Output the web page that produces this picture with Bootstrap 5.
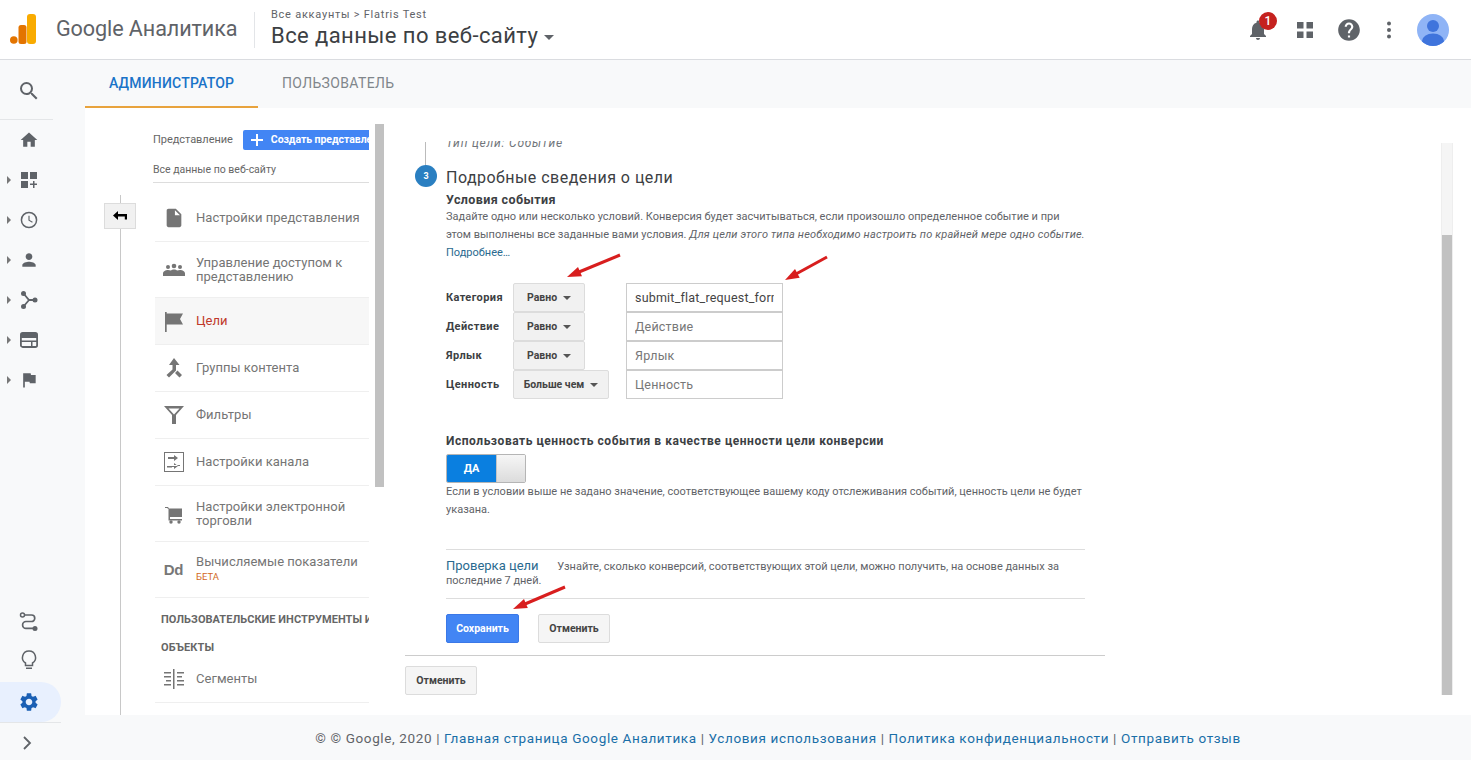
<!DOCTYPE html>
<html lang="ru">
<head>
<meta charset="utf-8">
<title>Google Аналитика</title>
<link href="https://cdn.jsdelivr.net/npm/bootstrap@5.3.0/dist/css/bootstrap.min.css" rel="stylesheet">
<style>
html,body{height:760px;overflow:hidden}
body{font-family:Roboto,"Liberation Sans",sans-serif;font-size:11px;color:#5f6368;background:#f8f9fa;width:1471px}
.ga-head{height:60px;background:#fff;border-bottom:1px solid #dadce0;padding-left:10px}
.ga-logo{width:26px;height:30px;margin-top:-2px}
.ga-brand{font-size:21.6px;color:#5f6368;margin-left:20px;width:183px;white-space:nowrap;letter-spacing:-.1px}
.ga-sep{width:1px;height:36px;background:#e3e5e8;margin:0 16px 0 15px}
.ga-crumb{font-size:11px;color:#5f6368;line-height:14px;margin-top:-2px;letter-spacing:.75px}
.ga-title{font-size:22px;color:#3c4043;line-height:28px;letter-spacing:.42px;white-space:nowrap}
.ga-caret{display:inline-block;border:5px solid transparent;border-top-color:#5f6368;border-bottom-width:0;margin-left:6px;vertical-align:3px;border-left-width:5.5px;border-right-width:5.5px}
.ga-tools{margin-left:auto;position:relative;flex:none;height:59px;padding-right:22px}
.ga-tool{width:44px;display:flex;justify-content:center;align-items:center;position:relative}
.ga-tool-bell{margin-right:3px}
.ga-tool-help{margin-right:-4px}
.ga-badge{position:absolute;left:23px;top:-6px;width:18px;height:18px;border-radius:50%;background:#c5221f;color:#fff;font-size:12px;font-weight:500;line-height:18px;text-align:center}
.ga-avatar{width:32px;height:32px;margin-left:6px}
.ga-main{height:700px}
.ga-rail{width:85px;flex:none;background:#f8f9fa;padding-top:11px}
.ga-rail-top{width:53px;padding-left:17px;border-bottom:1px solid #e4e6e8;height:49px;padding-top:8px}
.ga-rail-item{height:40px;width:58px;position:relative;display:flex;align-items:center;justify-content:center;color:#5f6368}
.ga-rail-item svg{fill:#5f6368}
.ga-rail-caret{position:absolute;left:7px;top:16px;width:0;height:0;border:4px solid transparent;border-left-color:#777;border-right-width:0}
.ga-rail-gap{flex:1}
.ga-rail-route{margin-bottom:-2px}
.ga-rail-bulb{margin-bottom:2px}
.ga-rail-on{width:61px;background:#e8f0fe;border-radius:0 20px 20px 0;padding-right:3px}
.ga-rail-on svg{fill:#1a5fb4}
.ga-rail-end{border-top:1px solid #e4e6e8;width:61px;height:38px;padding-top:9px;padding-right:7px}
.ga-body{width:1386px}
.ga-tabs{height:48px;background:#f8f9fa}
.ga-tab{height:48px;line-height:46px;padding:0 24px;font-size:14px;color:#80868b;letter-spacing:.37px}
.ga-tab-on{color:#1a73c8;border-bottom:2px solid #e8a33d;font-weight:500;padding:0 24px;width:173px;letter-spacing:.2px}
.ga-tab-off{padding-left:24px}
.ga-work{height:607px;background:#fff;position:relative;overflow:hidden}
.ga-left{width:300px;flex:none;position:relative;height:607px;padding:17px 0 0 68px}
.ga-left-in{width:216px;overflow:hidden}
.ga-rule{position:absolute;left:35px;top:87px;bottom:0;width:1px;background:#c8c8c8}
.ga-back{position:absolute;left:19px;top:95px;width:32px;height:26px;background:#f1f1f1;border:1px solid #dcdcdc;display:flex;align-items:center;justify-content:center}
.ga-sb{position:absolute;left:290px;top:16px;width:9px;height:363px;background:#c1c1c1}
.ga-viewrow{height:30px;white-space:nowrap;color:#666;letter-spacing:-.05px}
.ga-add{background:#4285f4;color:#fff;font-weight:700;border-radius:2px 0 0 2px;height:20px;line-height:20px;padding-left:7px;margin-left:10px;flex:1;overflow:hidden;font-size:10.5px;display:flex;align-items:center;gap:7px;min-width:0}
.ga-add svg{flex:none}
.ga-viewname{font-size:10.5px;height:28px;line-height:30px;border-bottom:1px solid #ddd;color:#666;margin-bottom:12px}
.ga-item{display:flex;align-items:center;border-bottom:1px solid #efefef;height:47px;margin-left:2px;font-size:13px;line-height:14px;color:#757575;letter-spacing:.03px}
.ga-item-tall{height:56px}
.ga-item-cur{background:#f7f7f7;color:#c0392b}
.ga-ic{width:41px;flex:none;display:flex;justify-content:center;padding-right:4px}
.ga-ic svg{fill:#757575}
.ga-dd{font:700 15px "Liberation Sans",sans-serif;color:#777;letter-spacing:-.2px}
.ga-beta{font-size:9.5px;color:#d2691e;display:block;margin-top:1px;letter-spacing:0}
.ga-sect{font-size:11px;font-weight:700;color:#666;line-height:28px;margin:8px 0 0 8px;white-space:nowrap;letter-spacing:.05px}
.ga-seg{height:43px;padding-bottom:4px;margin-top:-2px}
.ga-right{flex:1;position:relative;padding:33px 0 0 20px;height:607px}
.ga-clip{height:559px;overflow:hidden;width:700px;position:relative}
.ga-typeline{font-style:italic;color:#70757a;font-size:12px;line-height:14px;margin-left:41px;margin-top:-5px;height:14px;letter-spacing:.8px;white-space:nowrap}
.ga-stepline{position:absolute;left:20px;top:1px;width:1px;height:24px;background:#bbb}
.ga-step{position:absolute;left:10px;top:24px;width:22px;height:22px;border-radius:50%;background:#2a7fc1;color:#fff;font-size:9px;font-weight:700;line-height:22px;text-align:center}
.ga-pane{margin-left:41px;width:639px;padding-top:18px}
.ga-h{font-size:16px;line-height:20px;color:#3c4043;letter-spacing:.47px;margin:0;font-weight:400}
.ga-sub{font-size:12.5px;font-weight:700;color:#3c4043;line-height:16px;margin-top:4px;letter-spacing:.4px}
.ga-txt{font-size:11px;line-height:18px;color:#5f6368;white-space:nowrap}
.ga-txt i{letter-spacing:.17px}
.ga-more{color:#2a6a8f;line-height:18px;margin-bottom:21px}
.ga-fr{height:29px}
.ga-lab{width:67px;font-weight:700;color:#3c4043;font-size:11px;letter-spacing:.4px;padding-top:2px}
.ga-sel{width:72px;height:29px;background:#f1f1f1;border:1px solid #dcdcdc;border-radius:2px;font-size:10.5px;font-weight:700;color:#444;display:flex;align-items:center;justify-content:center;gap:6px;padding:0;box-shadow:none}
.ga-sel-w{width:96px}
.ga-tri{display:inline-block;border:3.5px solid transparent;border-top:4px solid #555;border-bottom:0;border-left-width:4px;border-right-width:4px}
.ga-inp{width:157px;height:29px;margin-left:41px;border:1px solid #ccc;border-radius:0;padding:0 8px;font-size:12.5px;color:#444;background:#fff;letter-spacing:.2px;box-shadow:none}
.ga-inp-w{margin-left:17px}
.ga-inp::placeholder{color:#777;opacity:1}
.ga-use{font-size:12px;font-weight:700;color:#3c4043;line-height:16px;margin-top:34px;letter-spacing:.54px;white-space:nowrap}
.ga-tog{width:80px;height:29px;margin-top:5px;border:1px solid #b5b5b5;border-radius:2px;overflow:hidden}
.ga-tog-on{width:49px;background:#0a7fe0;color:#fff;font-weight:700;font-size:11px;text-align:center;line-height:27px}
.ga-tog-off{flex:1;background:linear-gradient(#f6f6f6,#dcdcdc);border-left:1px solid #c4c4c4}
.ga-hr{border-top:1px solid #ddd;margin-top:30px}
.ga-check{padding:9px 0 10px;border-bottom:1px solid #ddd;line-height:14px;white-space:nowrap}
.ga-check b{font-weight:400;font-size:13px;color:#2a6a8f;margin-right:16px;letter-spacing:0}
.ga-btns{gap:19px;margin-top:15px}
.ga-btn{height:29px;width:72px;border:1px solid #dcdcdc;background:#f5f5f5;border-radius:2px;padding:0;font-size:10.5px;font-weight:700;color:#444;line-height:27px;box-shadow:none}
.ga-btn-blue{width:73px;background:#4285f4;border-color:#3b78e7;color:#fff}
.ga-btn:hover{background:#f5f5f5;color:#444;border-color:#dcdcdc}
.ga-btn-blue:hover{background:#4285f4;color:#fff;border-color:#3b78e7}
.ga-bot{width:700px;border-top:1px solid #ccc;margin-top:12px;padding-top:10px}
.ga-track{position:absolute;left:1356px;top:35px;width:12px;height:552px;background:#f5f5f5;border-left:1px solid #eee;border-right:1px solid #eee}
.ga-thumb{position:absolute;left:0;right:0;bottom:0;height:460px;background:#c1c1c1}
.ga-arrow{position:absolute;pointer-events:none}
.ga-arrow line{stroke:#d81e1e;stroke-width:3}
.ga-arrow polygon{fill:#d81e1e}
.ga-foot{height:45px;background:#f8f9fa;font-size:13.5px;line-height:46px;color:#5f6368;text-align:center;white-space:nowrap;letter-spacing:.63px}
.ga-foot a{color:#1a6fa8;text-decoration:none}
</style>
</head>
<body>
<header class="ga-head d-flex align-items-center">
  <svg class="ga-logo" viewBox="0 0 26 30"><rect x="17" y="0" width="9" height="30" rx="3" fill="#f9ab00"/><rect x="8.500" y="11" width="8" height="19" rx="2.500" fill="#e37400"/><circle cx="3.800" cy="26" r="3.800" fill="#e37400"/></svg>
  <div class="ga-brand">Google Аналитика</div>
  <div class="ga-sep"></div>
  <div>
    <div class="ga-crumb">Все аккаунты &gt; Flatris Test</div>
    <div class="ga-title">Все данные по веб-сайту<span class="ga-caret"></span></div>
  </div>
  <div class="ga-tools d-flex align-items-center justify-content-end">
    <div class="ga-tool ga-tool-bell"><svg width="24" height="24" viewBox="0 0 24 24" fill="#5f6368"><path d="M12 22c1.100 0 2-.9 2-2h-4c0 1.100.9 2 2 2zm6-6v-5c0-3.070-1.630-5.640-4.500-6.320V4c0-.83-.67-1.500-1.500-1.500s-1.500.67-1.500 1.500v.68C7.640 5.360 6 7.920 6 11v5l-2 2v1h16v-1l-2-2z"/></svg><span class="ga-badge">1</span></div>
    <div class="ga-tool"><svg width="24" height="24" viewBox="0 0 24 24" fill="#5f6368"><path d="M4 4h6.500v6.500H4zM13.500 4H20v6.500h-6.500zM4 13.500h6.500V20H4zM13.500 13.500H20V20h-6.500z"/></svg></div>
    <div class="ga-tool ga-tool-help"><svg width="26" height="26" viewBox="0 0 24 24" fill="#5f6368"><path d="M12 2C6.480 2 2 6.480 2 12s4.480 10 10 10 10-4.480 10-10S17.520 2 12 2zm1 17h-2v-2h2v2zm2.070-7.750l-.9.920C13.450 12.900 13 13.500 13 15h-2v-.5c0-1.100.45-2.100 1.170-2.830l1.240-1.260c.37-.36.59-.86.59-1.410 0-1.100-.9-2-2-2s-2 .9-2 2H8c0-2.210 1.790-4 4-4s4 1.790 4 4c0 .88-.36 1.680-.93 2.250z"/></svg></div>
    <div class="ga-tool"><svg width="24" height="24" viewBox="0 0 24 24" fill="#5f6368"><circle cx="12" cy="5.500" r="2"/><circle cx="12" cy="12" r="2"/><circle cx="12" cy="18.500" r="2"/></svg></div>
    <svg class="ga-avatar" viewBox="0 0 32 32"><defs><clipPath id="avc"><circle cx="16" cy="16" r="16"/></clipPath></defs><circle cx="16" cy="16" r="16" fill="#8fb4f6"/><g clip-path="url(#avc)" fill="#3f74dc"><circle cx="16" cy="12" r="6"/><ellipse cx="16" cy="27" rx="11" ry="7.500"/></g></svg>
  </div>
</header>
<div class="ga-main d-flex">
  <nav class="ga-rail d-flex flex-column">
    <div class="ga-rail-top"><svg width="24" height="24" viewBox="0 0 24 24" fill="#5f6368"><path d="M15.500 14h-.79l-.28-.27A6.470 6.470 0 0 0 16 9.500 6.500 6.500 0 1 0 9.500 16c1.610 0 3.090-.59 4.230-1.570l.27.280v.79l5 4.990L20.490 19l-4.990-5zm-6 0C7.010 14 5 11.990 5 9.500S7.010 5 9.500 5 14 7.010 14 9.500 11.990 14 9.500 14z"/></svg></div>
    <div class="ga-rail-item"><svg width="20" height="20" viewBox="0 0 24 24"><path d="M10 20v-6h4v6h5v-8h3L12 3 2 12h3v8z"/></svg></div>
    <div class="ga-rail-item"><span class="ga-rail-caret"></span><svg width="20" height="20" viewBox="0 0 20 20"><path d="M2 2h7v7H2zM11 2h7v7h-7zM2 11h7v7H2zM14 11h1.500v2.500H18V15h-2.500v3H14v-3h-3v-1.500h3z"/></svg></div>
    <div class="ga-rail-item"><span class="ga-rail-caret"></span><svg width="20" height="20" viewBox="0 0 24 24"><path d="M12 2a10 10 0 1 0 0 20 10 10 0 0 0 0-20zm0 18.200a8.200 8.200 0 1 1 0-16.400 8.200 8.200 0 0 1 0 16.400zM12.700 7h-1.400v5.600l4.500 2.800.7-1.200-3.800-2.300z"/></svg></div>
    <div class="ga-rail-item"><span class="ga-rail-caret"></span><svg width="20" height="20" viewBox="0 0 24 24"><path d="M12 12c2.210 0 4-1.790 4-4s-1.790-4-4-4-4 1.790-4 4 1.790 4 4 4zm0 2c-2.670 0-8 1.340-8 4v2h16v-2c0-2.660-5.330-4-8-4z"/></svg></div>
    <div class="ga-rail-item"><span class="ga-rail-caret"></span><svg width="20" height="20" viewBox="0 0 20 20"><circle cx="4.500" cy="3.500" r="2.500"/><circle cx="4.500" cy="16.500" r="2.500"/><circle cx="16" cy="10" r="2.500"/><path d="M4.500 3.500L10 10h6M4.500 16.500L10 10" fill="none" stroke="#5f6368" stroke-width="1.800"/></svg></div>
    <div class="ga-rail-item"><span class="ga-rail-caret"></span><svg width="20" height="20" viewBox="0 0 20 20"><rect x="1.900" y="3" width="16.200" height="14" rx="1.800" fill="none" stroke="#5f6368" stroke-width="1.800"/><path d="M2 3.500h16V8H2zM2 10.500h16V12H2zM12 11h1.500v5.500H12z"/></svg></div>
    <div class="ga-rail-item"><span class="ga-rail-caret"></span><svg width="20" height="20" viewBox="0 0 24 24"><path d="M14.400 6L14 4H5v17h2v-7h5.600l.4 2h7V6z"/></svg></div>
    <div class="ga-rail-gap"></div>
    <div class="ga-rail-item ga-rail-route"><svg width="22" height="22" viewBox="0 0 22 22"><circle cx="4.500" cy="4" r="2" fill="none" stroke="#5f6368" stroke-width="1.500"/><circle cx="17" cy="17.500" r="2.500"/><path d="M6.500 4h7a3 3 0 0 1 0 6.500H8a3 3 0 0 0 0 6.800h7" fill="none" stroke="#5f6368" stroke-width="1.700"/></svg></div>
    <div class="ga-rail-item ga-rail-bulb"><svg width="20" height="22" viewBox="0 0 20 22"><path d="M10 2a6.500 6.500 0 0 0-3.500 12v2.500h7V14A6.500 6.500 0 0 0 10 2z" fill="none" stroke="#5f6368" stroke-width="1.500"/><path d="M7 18.500h6v1.500H7z"/></svg></div>
    <div class="ga-rail-item ga-rail-on"><svg width="22" height="22" viewBox="0 0 24 24"><path d="M19.140 12.940c.04-.3.06-.61.06-.94 0-.32-.02-.64-.07-.94l2.030-1.580a.49.49 0 0 0 .12-.61l-1.920-3.320a.488.488 0 0 0-.59-.22l-2.390.96c-.5-.38-1.030-.7-1.620-.94l-.36-2.540a.484.484 0 0 0-.48-.41h-3.840c-.24 0-.43.17-.47.41l-.36 2.540c-.59.24-1.130.57-1.620.94l-2.390-.96c-.22-.08-.47 0-.59.22L2.740 8.870c-.12.21-.08.47.12.61l2.030 1.580c-.05.3-.09.63-.09.94s.02.64.07.94l-2.030 1.580a.49.49 0 0 0-.12.61l1.920 3.320c.12.22.37.29.59.22l2.390-.96c.5.38 1.030.7 1.620.94l.36 2.540c.05.24.24.41.48.41h3.840c.24 0 .44-.17.47-.41l.36-2.540c.59-.24 1.130-.56 1.620-.94l2.390.96c.22.08.47 0 .59-.22l1.920-3.320c.12-.22.07-.47-.12-.61l-2.010-1.580zM12 15.600c-1.980 0-3.600-1.620-3.600-3.600s1.620-3.600 3.600-3.600 3.600 1.620 3.600 3.600-1.620 3.600-3.600 3.600z"/></svg></div>
    <div class="ga-rail-end d-flex justify-content-center align-items-start"><svg width="22" height="22" viewBox="0 0 22 22"><path d="M8 5l6 6-6 6" fill="none" stroke="#5f6368" stroke-width="1.800"/></svg></div>
  </nav>
  <div class="ga-body d-flex flex-column">
    <div class="ga-tabs d-flex">
      <div class="ga-tab ga-tab-on text-nowrap">АДМИНИСТРАТОР</div>
      <div class="ga-tab ga-tab-off text-nowrap">ПОЛЬЗОВАТЕЛЬ</div>
    </div>
    <div class="ga-work d-flex">
      <aside class="ga-left">
        <div class="ga-rule"></div>
        <div class="ga-back"><svg width="14" height="10" viewBox="0 0 14 10"><path d="M0 4.500L5 0v3h9v5.500h-2.200V5.500H5V9z" fill="#000"/></svg></div>
        <div class="ga-left-in">
          <div class="ga-viewrow d-flex align-items-center">Представление<div class="ga-add"><svg width="14" height="14" viewBox="0 0 14 14"><path d="M6 1h2v5h5v2H8v5H6V8H1V6h5z" fill="#fff"/></svg>Создать представление</div></div>
          <div class="ga-viewname">Все данные по веб-сайту</div>
          <div class="ga-item"><span class="ga-ic"><svg width="22" height="22" viewBox="0 0 24 24"><path d="M6 2c-1.100 0-2 .9-2 2v16c0 1.100.9 2 2 2h12c1.100 0 2-.9 2-2V8l-6-6H6zm7 7V3.500L18.500 9H13z"/></svg></span><span>Настройки представления</span></div>
          <div class="ga-item ga-item-tall"><span class="ga-ic"><svg width="24" height="24" viewBox="0 0 24 24"><circle cx="6" cy="9" r="2"/><circle cx="12" cy="8" r="2.300"/><circle cx="18" cy="9" r="2"/><path d="M1 18v-2.500c0-2 2.500-3.500 5-3.500 1 0 2 .2 2.700.6C9.500 12 10.700 11.500 12 11.500s2.500.5 3.300 1.100c.7-.4 1.700-.6 2.700-.6 2.500 0 5 1.500 5 3.500V18z"/></svg></span><span>Управление доступом к представлению</span></div>
          <div class="ga-item ga-item-cur"><span class="ga-ic"><svg width="20" height="21" viewBox="0 0 20 21"><path d="M1 1h1.700v20H1zM2.700 2.500H19l-3 5.500 3 5.500H2.700z"/></svg></span><span>Цели</span></div>
          <div class="ga-item"><span class="ga-ic"><svg width="24" height="24" viewBox="0 0 24 24"><path d="M17.500 21.500L20 19l-4.500-4.500L13 17zM7 9h3.500v4.500L4.500 19 7 21.500l7-7V9h3.500L12 2z"/></svg></span><span>Группы контента</span></div>
          <div class="ga-item"><span class="ga-ic"><svg width="22" height="20" viewBox="0 0 22 20"><path fill-rule="evenodd" d="M1 1h20l-8 9v9H9v-9zM5.500 3.500L11 9.500l5.500-6z"/></svg></span><span>Фильтры</span></div>
          <div class="ga-item"><span class="ga-ic"><svg width="20" height="20" viewBox="0 0 20 20"><rect x=".5" y=".5" width="19" height="19" fill="none" stroke="#757575"/><path d="M4 5h6V3l4 3-4 3V7H4zM16 13h-6v-2l4 3-4 3v-2H6v-1h10zM3 14h5v1.500H3z"/></svg></span><span>Настройки канала</span></div>
          <div class="ga-item ga-item-tall"><span class="ga-ic"><svg width="20" height="20" viewBox="0 0 20 20"><path d="M1 3h3l1 1.500h13v8.500H6v2h12v1.500H4.500V5L3 4H1z"/><circle cx="7" cy="18" r="1.700"/><circle cx="15" cy="18" r="1.700"/></svg></span><span>Настройки электронной торговли</span></div>
          <div class="ga-item ga-item-tall"><span class="ga-ic"><span class="ga-dd">Dd</span></span><span>Вычисляемые показатели<span class="ga-beta">БЕТА</span></span></div>
          <div class="ga-sect">ПОЛЬЗОВАТЕЛЬСКИЕ ИНСТРУМЕНТЫ И<br>ОБЪЕКТЫ</div>
          <div class="ga-item ga-seg"><span class="ga-ic"><svg width="22" height="20" viewBox="0 0 22 20"><path d="M10 0h1.500v20H10zM1 3h7v1.500H1zM1 7h7v1.500H1zM3 11h5v1.500H3zM1 15h7v1.500H1zM14 3h7v1.500h-7zM14 7h5v1.500h-5zM14 11h7v1.500h-7zM14 15h7v1.500h-7z"/></svg></span><span>Сегменты</span></div>
        </div>
        <div class="ga-sb"></div>
      </aside>
      <section class="ga-right">
        <div class="ga-clip">
          <div class="ga-typeline">Тип цели: Событие</div>
          <div class="ga-stepline"></div>
          <div class="ga-step">3</div>
          <div class="ga-pane">
            <h2 class="ga-h">Подробные сведения о цели</h2>
            <div class="ga-sub">Условия события</div>
            <div class="ga-txt">Задайте одно или несколько условий. Конверсия будет засчитываться, если произошло определенное событие и при<br>этом выполнены все заданные вами условия. <i>Для цели этого типа необходимо настроить по крайней мере одно событие.</i></div>
            <div class="ga-more">Подробнее…</div>
            <div class="ga-fr d-flex align-items-center"><span class="ga-lab">Категория</span><button type="button" class="btn ga-sel">Равно <span class="ga-tri"></span></button><input class="form-control ga-inp" value="submit_flat_request_form"></div>
            <div class="ga-fr d-flex align-items-center"><span class="ga-lab">Действие</span><button type="button" class="btn ga-sel">Равно <span class="ga-tri"></span></button><input class="form-control ga-inp" placeholder="Действие"></div>
            <div class="ga-fr d-flex align-items-center"><span class="ga-lab">Ярлык</span><button type="button" class="btn ga-sel">Равно <span class="ga-tri"></span></button><input class="form-control ga-inp" placeholder="Ярлык"></div>
            <div class="ga-fr d-flex align-items-center"><span class="ga-lab">Ценность</span><button type="button" class="btn ga-sel ga-sel-w">Больше чем <span class="ga-tri"></span></button><input class="form-control ga-inp ga-inp-w" placeholder="Ценность"></div>
            <div class="ga-use">Использовать ценность события в качестве ценности цели конверсии</div>
            <div class="ga-tog d-flex"><div class="ga-tog-on">ДА</div><div class="ga-tog-off"></div></div>
            <div class="ga-txt">Если в условии выше не задано значение, соответствующее вашему коду отслеживания событий, ценность цели не будет<br>указана.</div>
            <div class="ga-hr"></div>
            <div class="ga-check"><b>Проверка цели</b> Узнайте, сколько конверсий, соответствующих этой цели, можно получить, на основе данных за<br>последние 7 дней.</div>
            <div class="ga-btns d-flex"><button type="button" class="btn ga-btn ga-btn-blue">Сохранить</button><button type="button" class="btn ga-btn">Отменить</button></div>
          </div>
          <div class="ga-bot"><button type="button" class="btn ga-btn">Отменить</button></div>
        </div>
      </section>
      <div class="ga-track"><div class="ga-thumb"></div></div>
      <svg class="ga-arrow" style="left:475px;top:140px" width="70" height="35" viewBox="0 0 70 35"><line x1="60" y1="7" x2="19" y2="24"/><polygon points="7,29 18,19 22,28.300"/></svg>
      <svg class="ga-arrow" style="left:695px;top:143px" width="55" height="35" viewBox="0 0 55 35"><line x1="47" y1="6" x2="16" y2="23"/><polygon points="5,29 15,18 19.700,26.700"/></svg>
      <svg class="ga-arrow" style="left:422px;top:473px" width="65" height="35" viewBox="0 0 65 35"><line x1="58" y1="6" x2="18" y2="23"/><polygon points="6,28 17,18 20.800,27"/></svg>
    </div>
    <footer class="ga-foot">© © Google, 2020 | <a href="#">Главная страница Google Аналитика</a> | <a href="#">Условия использования</a> | <a href="#">Политика конфиденциальности</a> | <a href="#">Отправить отзыв</a></footer>
  </div>
</div>
<script src="https://cdn.jsdelivr.net/npm/bootstrap@5.3.0/dist/js/bootstrap.bundle.min.js"></script>
</body>
</html>
